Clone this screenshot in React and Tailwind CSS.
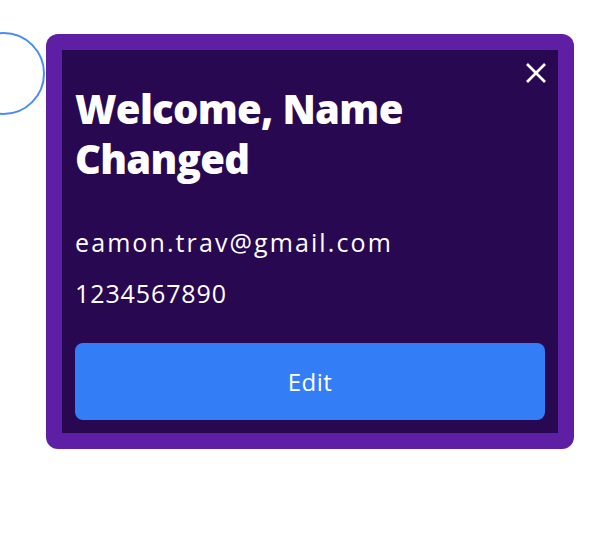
export default function App() {
  return (
    <div className="relative w-[600px] h-[538px] bg-white overflow-hidden" style={{ fontFamily: '"Open Sans", sans-serif' }}>
      <div className="absolute left-[-38px] top-[32px] w-[83px] h-[83px] rounded-full border-[2.5px] border-[#4b8bf4]" />
      <div className="pt-[34px] pl-[46px]">
        <div className="w-[528px] rounded-[12px] bg-[#5f1fa5] p-4">
          <div className="bg-[#290852] px-[13px] pt-[12px] pb-[13px] flex flex-col">
            <button className="self-end h-[22px] w-[22px] mr-[-2px] flex items-center justify-center">
              <svg width="22" height="22" viewBox="0 0 22 22" fill="none" stroke="white" strokeWidth="2.6">
                <line x1="2" y1="2" x2="20" y2="20" />
                <line x1="20" y1="2" x2="2" y2="20" />
              </svg>
            </button>
            <h1 className="text-white font-extrabold text-[40px] leading-[50px] tracking-[-0.7px] m-0">
              Welcome, Name
              <br />
              Changed
            </h1>
            <p className="mt-[40px] text-white text-[25px] leading-[36px] tracking-[2.1px]">eamon.trav@gmail.com</p>
            <p className="mt-[15px] text-white text-[25px] leading-[36px] tracking-[0.9px]">1234567890</p>
            <button className="mt-[32px] h-[77px] w-full rounded-[8px] bg-[#337ef7] text-white text-[24px] tracking-[0.5px] flex items-center justify-center">
              Edit
            </button>
          </div>
        </div>
      </div>
    </div>
  );
}
